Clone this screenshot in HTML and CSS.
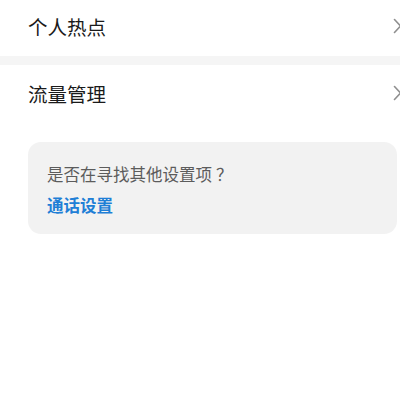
FILE: index.html
```html
<!DOCTYPE html>
<html lang="zh-CN">
<head>
<meta charset="utf-8">
<link rel="stylesheet" href="styles.css">
</head>
<body>
<div class="page">
  <div class="row row-first">
    <span class="row-title">个人热点</span>
    <svg class="chev" width="9" height="16" viewBox="0 0 9 16"><path d="M1.5 1.5 L7.5 8 L1.5 14.5" fill="none" stroke="#8f8f8f" stroke-width="1.6" stroke-linecap="round" stroke-linejoin="round"/></svg>
  </div>
  <div class="divider"></div>
  <div class="row row-second">
    <span class="row-title">流量管理</span>
    <svg class="chev" width="9" height="16" viewBox="0 0 9 16"><path d="M1.5 1.5 L7.5 8 L1.5 14.5" fill="none" stroke="#8f8f8f" stroke-width="1.6" stroke-linecap="round" stroke-linejoin="round"/></svg>
  </div>
  <div class="card">
    <div class="card-q">是否在寻找其他设置项<span class="qmark">？</span></div>
    <div class="card-link">通话设置</div>
  </div>
</div>
</body>
</html>
```
FILE: styles.css
```css
html, body {
  margin: 0;
  padding: 0;
  background: #ffffff;
}
body {
  font-family: "Noto Sans CJK SC", "Noto Sans", sans-serif;
  width: 400px;
  height: 400px;
  overflow: hidden;
}
.page {
  display: flex;
  flex-direction: column;
}
.row {
  display: flex;
  align-items: center;
  justify-content: space-between;
  padding-left: 28px;
  padding-bottom: 3px;
  box-sizing: border-box;
}
.row-first {
  height: 56px;
}
.row-second {
  height: 60px;
}
.row-title {
  font-size: 19.5px;
  color: #1a1a1a;
  line-height: 1;
}
.chev {
  display: block;
  margin-right: -2px;
  margin-top: -2px;
}
.divider {
  height: 9px;
  background: #f5f5f5;
}
.card {
  margin: 17px 3px 0 28px;
  background: #f2f2f2;
  border-radius: 13px;
  padding: 21px 0 18px 19px;
  display: flex;
  flex-direction: column;
  gap: 9px;
}
.card-q {
  font-size: 16.5px;
  line-height: 22px;
  color: #5c5c5c;
}
.qmark {
  margin-left: 4px;
}
.card-link {
  font-size: 16.5px;
  line-height: 22px;
  color: #1f7fd6;
  font-weight: 600;
}
```
